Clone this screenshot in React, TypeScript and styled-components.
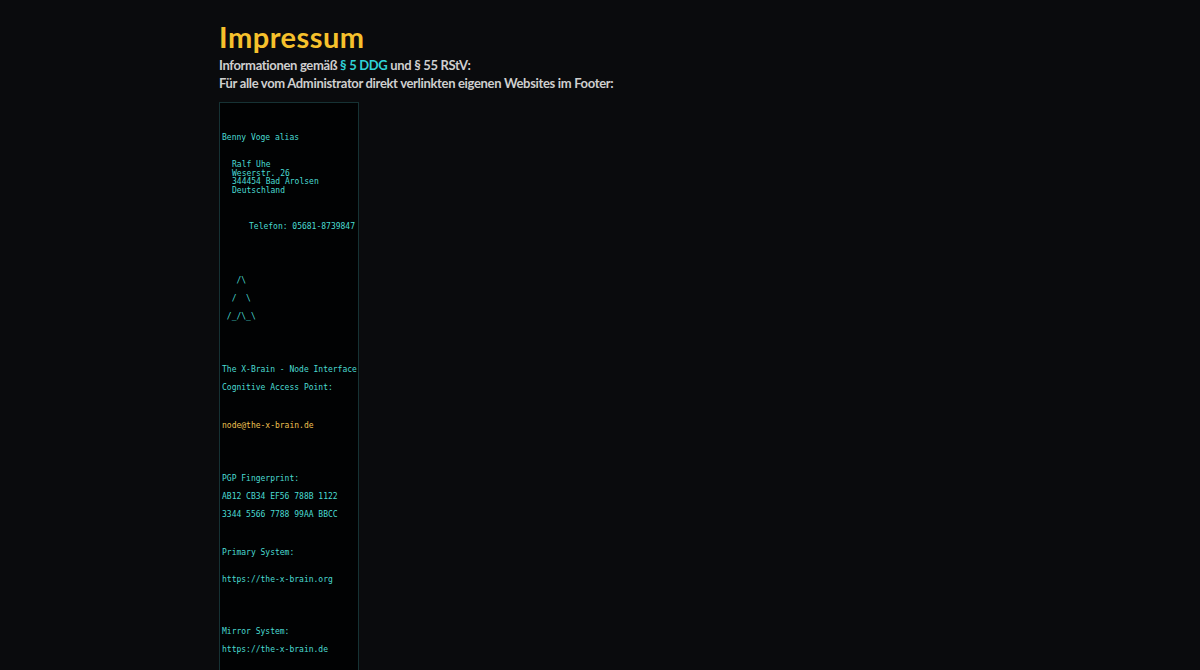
import React from "react";
import styled, { createGlobalStyle } from "styled-components";

const GlobalStyle = createGlobalStyle`
  html, body {
    margin: 0;
    padding: 0;
    background: #0a0b0d;
  }
  body {
    font-family: Lato, "Open Sans", "Liberation Sans", sans-serif;
    color: #d2d2d2;
    overflow: hidden;
  }
`;

const StyledPage = styled.main`
  width: 1200px;
  height: 670px;
  padding: 18px 0 0 219px;
  box-sizing: border-box;
  overflow: hidden;
`;

const StyledTitle = styled.h1`
  margin: 0;
  font-size: 29px;
  letter-spacing: 0.5px;
  line-height: 38px;
  font-weight: 700;
  color: #f6c12c;
`;

const StyledLead = styled.p`
  margin: 0;
  font-size: 13px;
  letter-spacing: -0.33px;
  line-height: 18px;
  font-weight: 700;
  color: #cfcfcf;
`;

const StyledLink = styled.a`
  color: #2fd2d6;
  text-decoration: none;
`;

const StyledCard = styled.section`
  margin-top: 10px;
  width: 140px;
  height: 600px;
  border: 1px solid #163234;
  border-bottom: none;
  background: #010203;
  padding: 26px 0 0 2px;
  box-sizing: border-box;
  font-family: "DejaVu Sans Mono", "Liberation Mono", monospace;
  font-size: 8px;
  color: #4adbd2;
  white-space: pre;
`;

const StyledLine = styled.div<{ $gap?: number; $indent?: number; $accent?: boolean }>`
  margin-top: ${(p) => p.$gap ?? 0}px;
  padding-left: ${(p) => p.$indent ?? 0}px;
  line-height: 18px;
  color: ${(p) => (p.$accent ? "#eec050" : "inherit")};
`;

const StyledAddress = styled.div<{ $gap: number }>`
  margin-top: ${(p) => p.$gap}px;
  padding-left: 10px;
  line-height: 8.7px;
`;

export default function App() {
  return (
    <>
      <GlobalStyle />
      <StyledPage>
        <StyledTitle>Impressum</StyledTitle>
        <StyledLead>
          Informationen gemäß <StyledLink href="#">§ 5 DDG</StyledLink> und § 55 RStV:
        </StyledLead>
        <StyledLead>Für alle vom Administrator direkt verlinkten eigenen Websites im Footer:</StyledLead>

        <StyledCard>
          <StyledLine>Benny Voge alias</StyledLine>
          <StyledAddress $gap={14}>
            {"Ralf Uhe\nWeserstr. 26\n344454 Bad Arolsen\nDeutschland"}
          </StyledAddress>
          <StyledLine $gap={22} $indent={27}>
            Telefon: 05681-8739847
          </StyledLine>

          <StyledLine $gap={36}>{"   /\\"}</StyledLine>
          <StyledLine>{"  /  \\"}</StyledLine>
          <StyledLine>{" /_/\\_\\"}</StyledLine>

          <StyledLine $gap={35}>The X-Brain - Node Interface</StyledLine>
          <StyledLine>Cognitive Access Point:</StyledLine>
          <StyledLine $gap={20} $accent>
            node@the-x-brain.de
          </StyledLine>

          <StyledLine $gap={35}>PGP Fingerprint:</StyledLine>
          <StyledLine>AB12 CB34 EF56 788B 1122</StyledLine>
          <StyledLine>3344 5566 7788 99AA BBCC</StyledLine>

          <StyledLine $gap={20}>Primary System:</StyledLine>
          <StyledLine $gap={9}>https://the-x-brain.org</StyledLine>

          <StyledLine $gap={34}>Mirror System:</StyledLine>
          <StyledLine>https://the-x-brain.de</StyledLine>
        </StyledCard>
      </StyledPage>
    </>
  );
}
